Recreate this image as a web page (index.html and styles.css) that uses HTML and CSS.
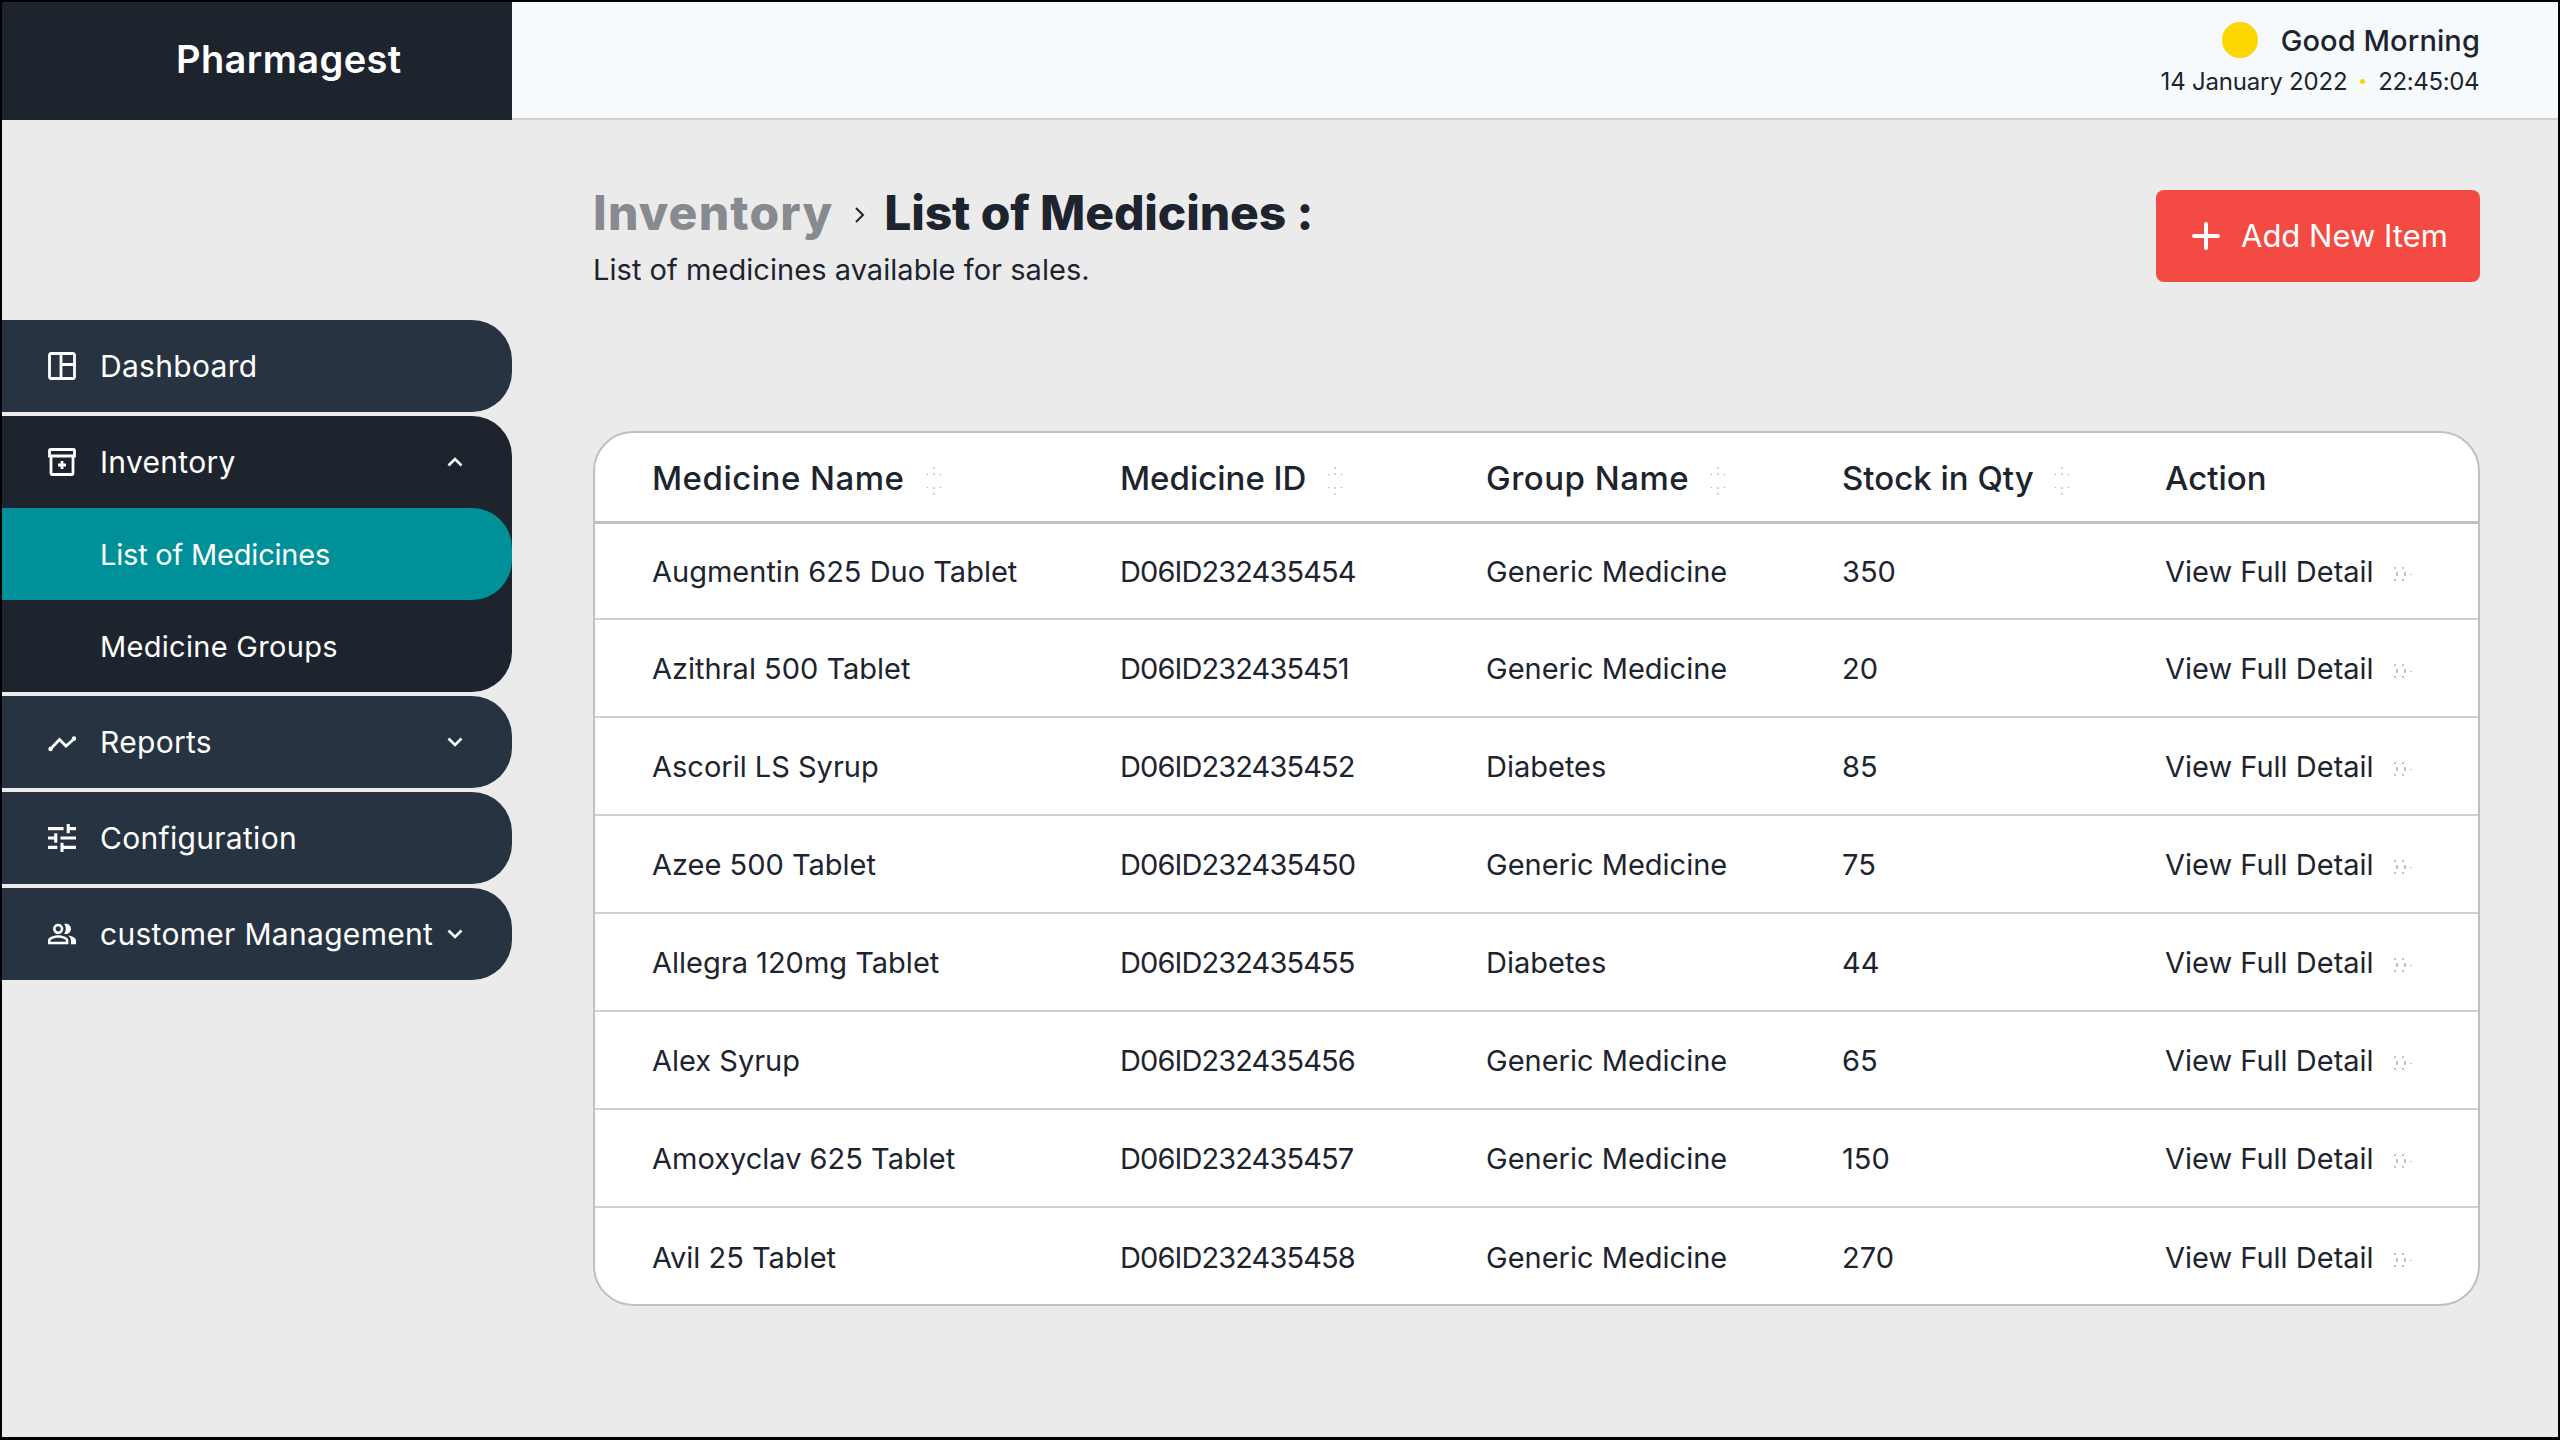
FILE: index.html
```html
<!DOCTYPE html>
<html lang="en">
<head>
    <meta charset="UTF-8">
    <title>Pharmagest | List of Medicines</title>
    <link rel="stylesheet" href="styles.css">
</head>
<body>
    <svg class="sprites" width="0" height="0">
        <symbol id="sort" viewBox="0 0 16 28">
            <path d="M8 0v2M8 6v2M1 8l1-1M15 8l-1-1M1 20l1 1M15 20l-1 1M8 20v2M8 26v2" />
        </symbol>
        <symbol id="eye" viewBox="0 0 18 18">
            <path class="soft" d="M1 2v2M9 2v2M1 14v2M9 14v2M17 9v1" />
            <path d="M3 7v4M11 7v4" />
        </symbol>
        <symbol id="chev-down" viewBox="0 0 16 10">
            <path class="chev" d="M1.500 1.500L8 8l6.500-6.500" />
        </symbol>
    </svg>

    <div class="frame">
        <header class="topbar">
            <div class="brand">Pharmagest</div>
            <div class="greeting">
                <div class="greeting-line">
                    <span class="sun"></span>
                    <span class="greeting-text">Good Morning</span>
                </div>
                <div class="clock">
                    <span class="clock-date">14 January 2022</span>
                    <span class="clock-dot"></span>
                    <span class="clock-time">22:45:04</span>
                </div>
            </div>
        </header>

        <div class="layout">
            <nav class="sidebar">
                <a class="nav-item">
                    <svg class="nav-icon" viewBox="0 0 28 28"><path class="line" d="M3 1.500h22a1.500 1.500 0 0 1 1.500 1.500v22a1.500 1.500 0 0 1-1.500 1.500H3A1.500 1.500 0 0 1 1.500 25V3A1.500 1.500 0 0 1 3 1.500zM13 1.500v25M13 12.500h13.500" /></svg>
                    <span>Dashboard</span>
                </a>
                <div class="nav-group">
                    <a class="nav-item nav-item-open">
                        <svg class="nav-icon" viewBox="0 0 28 28"><path class="line" d="M2.500 1.500h23a1 1 0 0 1 1 1V8h-25V2.500a1 1 0 0 1 1-1zM3 8v17.500a1 1 0 0 0 1 1h20a1 1 0 0 0 1-1V8M14 13v8M10 17h8" /></svg>
                        <span>Inventory</span>
                        <svg class="nav-chev nav-chev-up"><use href="#chev-down" /></svg>
                    </a>
                    <a class="nav-sub nav-sub-active">List of Medicines</a>
                    <a class="nav-sub">Medicine Groups</a>
                </div>
                <a class="nav-item">
                    <svg class="nav-icon" viewBox="0 0 28 28"><path class="line" d="M2.500 21L11.500 11.500L18 18L26 11" /><circle cx="2.500" cy="21" r="2.200" /><circle cx="26" cy="10.500" r="2.200" /></svg>
                    <span>Reports</span>
                    <svg class="nav-chev"><use href="#chev-down" /></svg>
                </a>
                <a class="nav-item">
                    <svg class="nav-icon" viewBox="3 3 18 18"><path d="M3 17v2h6v-2H3zM3 5v2h10V5H3zm10 16v-2h8v-2h-8v-2h-2v6h2zM7 9v2H3v2h4v2h2V9H7zm14 4v-2H11v2h10zm-6-4h2V7h4V5h-4V3h-2v6z" /></svg>
                    <span>Configuration</span>
                </a>
                <a class="nav-item">
                    <svg class="nav-icon" viewBox="1 1.500 22 21"><path d="M16.670 13.130C18.040 14.060 19 15.320 19 17v3h4v-3c0-2.180-3.570-3.470-6.330-3.870zM15 12c2.210 0 4-1.790 4-4s-1.790-4-4-4c-.47 0-.91.100-1.330.240C14.500 5.270 15 6.580 15 8s-.5 2.730-1.330 3.760c.42.140.86.240 1.330.240zM9 12c2.210 0 4-1.790 4-4s-1.790-4-4-4-4 1.790-4 4 1.790 4 4 4zm0-6c1.100 0 2 .9 2 2s-.9 2-2 2-2-.9-2-2 .9-2 2-2zM9 13c-2.670 0-8 1.340-8 4v3h16v-3c0-2.660-5.330-4-8-4zm6 5H3v-.99C3.200 16.290 6.300 15 9 15s5.800 1.290 6 2z" /></svg>
                    <span>customer Management</span>
                    <svg class="nav-chev"><use href="#chev-down" /></svg>
                </a>
            </nav>

            <main class="content">
                <div class="page-head">
                    <div>
                        <h1 class="page-title">
                            <span class="crumb">Inventory</span>
                            <svg class="crumb-arrow" viewBox="0 0 12 18"><path d="M2 2l7 7-7 7" /></svg>
                            <span>List of Medicines :</span>
                        </h1>
                        <p class="page-sub">List of medicines available for sales.</p>
                    </div>
                    <button class="add-btn">
                        <svg class="add-icon" viewBox="0 0 28 28"><path d="M14 2v24M2 14h24" /></svg>
                        <span>Add New Item</span>
                    </button>
                </div>

                <div class="table-card">
                    <table class="med-table">
                        <colgroup>
                            <col class="col-name"><col class="col-id"><col class="col-group"><col class="col-qty"><col>
                        </colgroup>
                        <thead>
                            <tr>
                                <th>Medicine Name <svg class="sort-icon"><use href="#sort" /></svg></th>
                                <th>Medicine ID <svg class="sort-icon"><use href="#sort" /></svg></th>
                                <th>Group Name <svg class="sort-icon"><use href="#sort" /></svg></th>
                                <th>Stock in Qty <svg class="sort-icon"><use href="#sort" /></svg></th>
                                <th>Action</th>
                            </tr>
                        </thead>
                        <tbody>
                            <tr><td>Augmentin 625 Duo Tablet</td><td>D06ID232435454</td><td>Generic Medicine</td><td>350</td><td>View Full Detail <svg class="eye-icon"><use href="#eye" /></svg></td></tr>
                            <tr><td>Azithral 500 Tablet</td><td>D06ID232435451</td><td>Generic Medicine</td><td>20</td><td>View Full Detail <svg class="eye-icon"><use href="#eye" /></svg></td></tr>
                            <tr><td>Ascoril LS Syrup</td><td>D06ID232435452</td><td>Diabetes</td><td>85</td><td>View Full Detail <svg class="eye-icon"><use href="#eye" /></svg></td></tr>
                            <tr><td>Azee 500 Tablet</td><td>D06ID232435450</td><td>Generic Medicine</td><td>75</td><td>View Full Detail <svg class="eye-icon"><use href="#eye" /></svg></td></tr>
                            <tr><td>Allegra 120mg Tablet</td><td>D06ID232435455</td><td>Diabetes</td><td>44</td><td>View Full Detail <svg class="eye-icon"><use href="#eye" /></svg></td></tr>
                            <tr><td>Alex Syrup</td><td>D06ID232435456</td><td>Generic Medicine</td><td>65</td><td>View Full Detail <svg class="eye-icon"><use href="#eye" /></svg></td></tr>
                            <tr><td>Amoxyclav 625 Tablet</td><td>D06ID232435457</td><td>Generic Medicine</td><td>150</td><td>View Full Detail <svg class="eye-icon"><use href="#eye" /></svg></td></tr>
                            <tr><td>Avil 25 Tablet</td><td>D06ID232435458</td><td>Generic Medicine</td><td>270</td><td>View Full Detail <svg class="eye-icon"><use href="#eye" /></svg></td></tr>
                        </tbody>
                    </table>
                </div>
            </main>
        </div>
    </div>
</body>
</html>
```

FILE: styles.css
```css
* {
    margin: 0;
    padding: 0;
    box-sizing: border-box;
    font-family: Inter, "Noto Sans", sans-serif;
}

body {
    width: 2560px;
    height: 1440px;
    overflow: hidden;
    background: #000;
}

.sprites {
    position: absolute;
}

.frame {
    height: 1440px;
    border: 2px solid #000;
    border-bottom-width: 3px;
    background: #ebebeb;
    color: #1d242e;
    display: flex;
    flex-direction: column;
}

/* top bar */
.topbar {
    height: 118px;
    display: flex;
    justify-content: space-between;
    background: #f7fafd;
    border-bottom: 2px solid #cfd0d2;
}

.brand {
    width: 510px;
    height: 118px;
    padding: 0 0 5px 174px;
    display: flex;
    align-items: center;
    background: #1d242e;
    color: #fff;
    font-size: 38px;
    font-weight: 600;
    letter-spacing: 0.4px;
}

.greeting {
    padding: 19px 78px 0 0;
    display: flex;
    flex-direction: column;
    align-items: flex-end;
}

.greeting-line {
    display: flex;
    align-items: center;
    gap: 23px;
    height: 38px;
    font-size: 29px;
    font-weight: 500;
    letter-spacing: 0.1px;
}

.sun {
    width: 36px;
    height: 36px;
    border-radius: 50%;
    background: #fed600;
}

.clock {
    margin-top: 8px;
    padding-right: 1px;
    display: flex;
    align-items: center;
    font-size: 24px;
}

.clock-date {
    letter-spacing: -0.2px;
}

.clock-time {
    letter-spacing: -0.4px;
}

.clock-dot {
    width: 5px;
    height: 5px;
    margin: 0 13px;
    border-radius: 50%;
    background: #fed600;
}

/* sidebar */
.layout {
    flex: 1;
    display: flex;
}

.sidebar {
    width: 510px;
    padding-top: 200px;
    display: flex;
    flex-direction: column;
    gap: 4px;
    flex-shrink: 0;
}

.nav-item,
.nav-sub {
    height: 92px;
    display: flex;
    align-items: center;
    border-radius: 0 40px 40px 0;
    color: #fff;
    font-size: 30px;
    letter-spacing: 0.3px;
}

.nav-item {
    padding: 0 49px 0 46px;
    background: #283342;
}

.nav-group {
    background: #1d242e;
    border-radius: 0 40px 40px 0;
}

.nav-item-open {
    background: transparent;
}

.nav-sub {
    padding-left: 98px;
    font-size: 29px;
}

.nav-sub-active {
    background: #009099;
    letter-spacing: -0.2px;
}

.nav-icon {
    width: 28px;
    height: 28px;
    margin-right: 24px;
    flex-shrink: 0;
    fill: #fff;
}

.nav-icon .line {
    fill: none;
    stroke: #fff;
    stroke-width: 2.800;
}

.nav-chev {
    width: 16px;
    height: 10px;
    margin-left: auto;
}

.nav-chev-up {
    transform: rotate(180deg);
}

.chev {
    fill: none;
    stroke: #fff;
    stroke-width: 2.600;
}

/* page */
.content {
    flex: 1;
    padding: 69px 78px 0 81px;
}

.page-head {
    height: 93px;
    margin-bottom: 149px;
    display: flex;
    justify-content: space-between;
    align-items: flex-start;
}

.page-title {
    display: flex;
    align-items: center;
    gap: 21px;
    height: 46px;
    font-size: 48px;
    font-weight: 800;
    letter-spacing: -0.15px;
}

.crumb {
    color: #878a8e;
    letter-spacing: 1.200px;
}

.crumb-arrow {
    width: 12px;
    height: 18px;
    margin: 5px -3px 0 0;
    fill: none;
    stroke: #1d242e;
    stroke-width: 2;
}

.page-sub {
    margin-top: 17px;
    font-size: 29px;
    letter-spacing: 0.05px;
}

.add-btn {
    width: 324px;
    height: 92px;
    margin-top: 1px;
    padding: 0 0 2px 36px;
    display: flex;
    align-items: center;
    gap: 21px;
    border: none;
    border-radius: 8px;
    background: #f34b43;
    color: #fff;
    font-size: 31px;
}

.add-icon {
    width: 28px;
    height: 28px;
    margin-top: 2px;
    fill: none;
    stroke: #fff;
    stroke-width: 4;
    stroke-linecap: round;
}

/* table */
.table-card {
    height: 875px;
    background: #fff;
    border: 2px solid #bfc0c5;
    border-radius: 40px;
    overflow: hidden;
}

.med-table {
    width: 100%;
    table-layout: fixed;
    border-collapse: separate;
    border-spacing: 0;
}

.col-name { width: 468px; }
.col-id { width: 366px; }
.col-group { width: 356px; }
.col-qty { width: 323px; }

.med-table th,
.med-table td {
    padding-left: 57px;
    text-align: left;
    white-space: nowrap;
}

.med-table th {
    height: 91px;
    padding-top: 2px;
    font-size: 33px;
    font-weight: 500;
    border-bottom: 3px solid #bfc0c5;
}

.med-table th:nth-child(1),
.med-table th:nth-child(3) {
    letter-spacing: 0.5px;
}

.med-table td {
    height: 98px;
    padding-top: 1px;
    font-size: 29px;
    border-bottom: 2px solid #d2d2d4;
}

.med-table tbody tr:first-child td {
    height: 96px;
}

.med-table td:nth-child(2) {
    letter-spacing: -0.9px;
}

.med-table tr:last-child td {
    border-bottom: none;
}

.sort-icon {
    width: 16px;
    height: 28px;
    margin-left: 12px;
    vertical-align: middle;
    fill: none;
    stroke: #b8b8b8;
    stroke-width: 1.200;
}

.eye-icon {
    width: 18px;
    height: 18px;
    margin-left: 12px;
    vertical-align: middle;
    fill: none;
    stroke: #9a9a9a;
    stroke-width: 1.200;
}

.eye-icon .soft {
    stroke: #c9c9c9;
}
```
